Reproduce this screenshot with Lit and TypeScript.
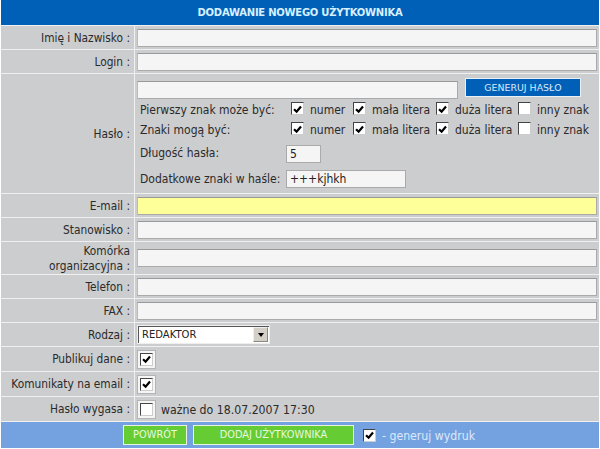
import { LitElement, html, css } from "lit";
import { customElement } from "lit/decorators.js";

const check = (on: boolean) => html`<span class="cb ${on ? "on" : ""}">${on
  ? html`<svg viewBox="0 0 9 9" width="9" height="9"><path d="M1 4.2l2.6 2.4L8 1.5" fill="none" stroke="#000" stroke-width="2.2"/></svg>`
  : ""}</span>`;

@customElement("app-root")
export class AppRoot extends LitElement {
  static styles = css`
    :host { display: block; width: 600px; height: 449px; background: #fff; overflow: hidden;
      font-family: "DejaVu Sans", sans-serif; font-stretch: condensed; font-size: 11.8px; color: #2a2a2a; }
    * { box-sizing: border-box; }
    .wrap { margin-left: 1px; width: 598px; display: flex; flex-direction: column; }
    .head { height: 25px; background: #0060b8; color: #d8f0ff; font: bold 10px/25px "DejaVu Sans", sans-serif; text-align: center; letter-spacing: -0.25px; }
    .row { display: grid; grid-template-columns: 134px 1fr; border-top: 1px solid #f0f0f0; background: #cccdcf; white-space: nowrap; }
    .lab { display: flex; align-items: center; justify-content: flex-end; text-align: right; padding: 1px 4px 0 0; line-height: 15px; border-right: 1px solid #f0f0f0; }
    .val { display: flex; align-items: center; padding: 0 2px; gap: 5px; }
    .top { align-items: flex-start; }
    .inp { height: 18px; flex: 1; background: #f5f5f5; border: 1px solid #aaa; border-top-color: #999; border-left-color: #bbb; }
    .yellow { background: #ffff99; }
    .pw { display: flex; flex-direction: column; flex: 1; font-size: 12px; }
    .pwtop { display: flex; gap: 7px; align-items: flex-start; height: 20px; margin-top: 4px; }
    .pwinp { width: 321px; flex: none; margin-top: 3px; }
    .gen { width: 116px; height: 19px; background: #0060b8; border: 1px solid #e8f0f8; color: #d8e8f8; font: 9.4px/17px "DejaVu Sans", sans-serif; text-align: center; }
    .opts { display: grid; grid-template-columns: 151px 62px 83px 82px auto; align-items: center; height: 20px; padding-left: 3px; }
    .opts > span:first-child, .opt > span { padding-top: 3px; }
    .opt { display: flex; align-items: center; gap: 6px; }
    .line { display: flex; align-items: center; padding-left: 3px; }
    .len { height: 25px; }
    .first { margin-top: 3px; }
    .len .t { width: 146px; }
    .first .t { padding-bottom: 2px; }
    .box { height: 18px; background: #f5f5f5; border: 1px solid #aaa; padding-left: 3px; line-height: 16px; color: #222; }
    .short { width: 35px; }
    .long { width: 120px; }
    .cb { display: inline-flex; align-items: center; justify-content: center; width: 13px; height: 13px; background: #fff; border: 1px solid #444; border-right-color: #ccc; border-bottom-color: #ccc; flex: none; }
    .cbw { display: inline-flex; align-items: center; justify-content: center; width: 19px; height: 19px; background: #f5f5f5; border: 1px solid #b4b4b4; }
    .extra { font-size: 12.2px; padding-top: 2px; }
    .sel { width: 133px; height: 19px; background: #fff; border: 1px solid #eee; box-shadow: inset 1px 1px #555; display: flex; align-items: center; justify-content: space-between; padding: 0 1px 0 4px; font: 10px "DejaVu Sans", sans-serif; color: #222; }
    .arrow { width: 15px; height: 15px; background: #d4d0c8; border: 1px solid #888; border-top-color: #eee; border-left-color: #eee; display: flex; align-items: center; justify-content: center; }
    .arrow i { border: 3.5px solid transparent; border-top: 4px solid #000; border-bottom: 0; }
    .foot { height: 27px; background: #74a2e0; border-top: 1px solid #f0f0f0; display: flex; align-items: center; padding-left: 122px; gap: 6px; color: #dce9fb; }
    .btn { height: 20px; background: #66cc33; border: 1px solid #e8f4e0; color: #e8f8e0; font: 9.8px/18px "DejaVu Sans", sans-serif; text-align: center; }
    .back { width: 64px; }
    .add { width: 161px; }
    .foot .cb { margin-left: 3px; }
    .gw { font-size: 12.2px; padding-top: 1px; }
  `;

  private textRow(label: unknown, h: number, cls = "") {
    return html`<div class="row" style="height:${h}px"><div class="lab">${label}</div><div class="val"><div class="inp ${cls}"></div></div></div>`;
  }

  private optRow(label: string, vals: boolean[]) {
    const names = ["numer", "mała litera", "duża litera", "inny znak"];
    return html`<div class="opts"><span>${label}</span>${names.map(
      (n, i) => html`<span class="opt">${check(vals[i])}<span>${n}</span></span>`
    )}</div>`;
  }

  private cbRow(label: string, h: number, on: boolean, extra = "") {
    return html`<div class="row" style="height:${h}px"><div class="lab">${label}</div><div class="val"><span class="cbw">${check(on)}</span><span class="extra">${extra}</span></div></div>`;
  }

  render() {
    return html`<div class="wrap">
      <div class="head">DODAWANIE NOWEGO UŻYTKOWNIKA</div>
      ${this.textRow("Imię i Nazwisko :", 24)}
      ${this.textRow("Login :", 24)}
      <div class="row" style="height:120px">
        <div class="lab">Hasło :</div>
        <div class="val top">
          <div class="pw">
            <div class="pwtop"><div class="inp pwinp"></div><div class="gen">GENERUJ HASŁO</div></div>
            ${this.optRow("Pierwszy znak może być:", [true, true, true, false])}
            ${this.optRow("Znaki mogą być:", [true, true, true, false])}
            <div class="line len first"><span class="t">Długość hasła:</span><div class="box short">5</div></div>
            <div class="line len"><span class="t">Dodatkowe znaki w haśle:</span><div class="box long">+++kjhkh</div></div>
          </div>
        </div>
      </div>
      ${this.textRow("E-mail :", 24, "yellow")}
      ${this.textRow("Stanowisko :", 24)}
      ${this.textRow(html`Komórka<br />organizacyjna :`, 33)}
      ${this.textRow("Telefon :", 24)}
      ${this.textRow("FAX :", 24)}
      <div class="row" style="height:24px"><div class="lab">Rodzaj :</div><div class="val"><div class="sel"><span>REDAKTOR</span><span class="arrow"><i></i></span></div></div></div>
      ${this.cbRow("Publikuj dane :", 25, true)}
      ${this.cbRow("Komunikaty na email :", 25, true)}
      ${this.cbRow("Hasło wygasa :", 25, false, "ważne do 18.07.2007 17:30")}
      <div class="foot">
        <div class="btn back">POWRÓT</div>
        <div class="btn add">DODAJ UŻYTKOWNIKA</div>
        ${check(true)}<span class="gw">- generuj wydruk</span>
      </div>
    </div>`;
  }
}
